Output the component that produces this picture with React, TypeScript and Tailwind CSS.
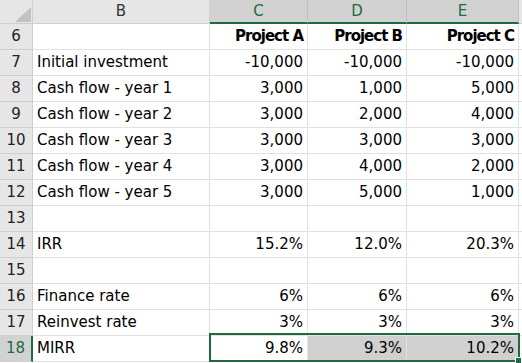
import React from "react";

const rows: { n: number; label: string; c: string; d: string; e: string; bold?: boolean }[] = [
  { n: 6, label: "", c: "Project A", d: "Project B", e: "Project C", bold: true },
  { n: 7, label: "Initial investment", c: "-10,000", d: "-10,000", e: "-10,000" },
  { n: 8, label: "Cash flow - year 1", c: "3,000", d: "1,000", e: "5,000" },
  { n: 9, label: "Cash flow - year 2", c: "3,000", d: "2,000", e: "4,000" },
  { n: 10, label: "Cash flow - year 3", c: "3,000", d: "3,000", e: "3,000" },
  { n: 11, label: "Cash flow - year 4", c: "3,000", d: "4,000", e: "2,000" },
  { n: 12, label: "Cash flow - year 5", c: "3,000", d: "5,000", e: "1,000" },
  { n: 13, label: "", c: "", d: "", e: "" },
  { n: 14, label: "IRR", c: "15.2%", d: "12.0%", e: "20.3%" },
  { n: 15, label: "", c: "", d: "", e: "" },
  { n: 16, label: "Finance rate", c: "6%", d: "6%", e: "6%" },
  { n: 17, label: "Reinvest rate", c: "3%", d: "3%", e: "3%" },
  { n: 18, label: "MIRR", c: "9.8%", d: "9.3%", e: "10.2%" },
];

const font = { fontFamily: '"DejaVu Sans", sans-serif' };

export default function App() {
  return (
    <div
      className="relative w-[522px] h-[363px] overflow-hidden bg-white text-[15px] text-black"
      style={font}
    >
      {/* header row */}
      <div className="grid grid-cols-[33px_177px_98px_99px_112px_1fr] h-[24px] leading-[23px]">
        <div className="relative bg-[#e6e6e6] border-r border-b border-[#cfcfcf]">
          <svg className="absolute left-[15px] top-[7px]" width="16" height="15" viewBox="0 0 16 15">
            <polygon points="16,0 16,15 0,15" fill="#c2c2c2" />
          </svg>
        </div>
        <div className="bg-[#e6e6e6] border-r border-b border-[#cfcfcf] text-center text-[#333]">B</div>
        <div className="bg-[#d2d2d2] border-r border-[#bdbdbd] border-b-2 border-b-[#1e6b41] text-center text-[#1e6b41] leading-[22px]">C</div>
        <div className="bg-[#d2d2d2] border-r border-[#bdbdbd] border-b-2 border-b-[#1e6b41] text-center text-[#1e6b41] leading-[22px]">D</div>
        <div className="bg-[#d2d2d2] border-r border-[#bdbdbd] border-b-2 border-b-[#1e6b41] text-center text-[#1e6b41] leading-[22px]">E</div>
        <div className="bg-[#e6e6e6] border-b border-[#cfcfcf]"></div>
      </div>

      {rows.map((r) => {
        const sel = r.n === 18;
        const cellCls = "border-r border-b border-[#e1e1e1] text-right pr-[4px] whitespace-nowrap";
        const valStyle = r.bold ? "font-bold tracking-[-1px]" : "";
        return (
          <div
            key={r.n}
            className="grid grid-cols-[33px_177px_98px_99px_112px_1fr] h-[26px] leading-[25px]"
          >
            <div
              className={
                sel
                  ? "bg-[#d2d2d2] border-r-2 border-r-[#1e6b41] border-b border-b-[#cfcfcf] text-center text-[#1e6b41]"
                  : "bg-[#e6e6e6] border-r border-b border-[#cfcfcf] text-center text-[#222]"
              }
            >
              {r.n}
            </div>
            <div className="border-r border-b border-[#e1e1e1] pl-[4px] whitespace-nowrap">{r.label}</div>
            <div className={`${cellCls} ${valStyle}`}>{r.c}</div>
            <div className={`${cellCls} ${valStyle} ${sel ? "bg-[#d0d0d0]" : ""}`}>{r.d}</div>
            <div className={`${cellCls} ${valStyle} ${sel ? "bg-[#d0d0d0]" : ""}`}>{r.e}</div>
            <div className="border-b border-[#e1e1e1]"></div>
          </div>
        );
      })}

      {/* selection border */}
      <div className="absolute left-[209px] top-[333px] w-[311px] h-[29px] border-2 border-[#1e6b41] pointer-events-none"></div>
      {/* fill handle */}
      <div className="absolute left-[515px] top-[357px] w-[7px] h-[7px] bg-[#1e6b41] border border-white"></div>
    </div>
  );
}
